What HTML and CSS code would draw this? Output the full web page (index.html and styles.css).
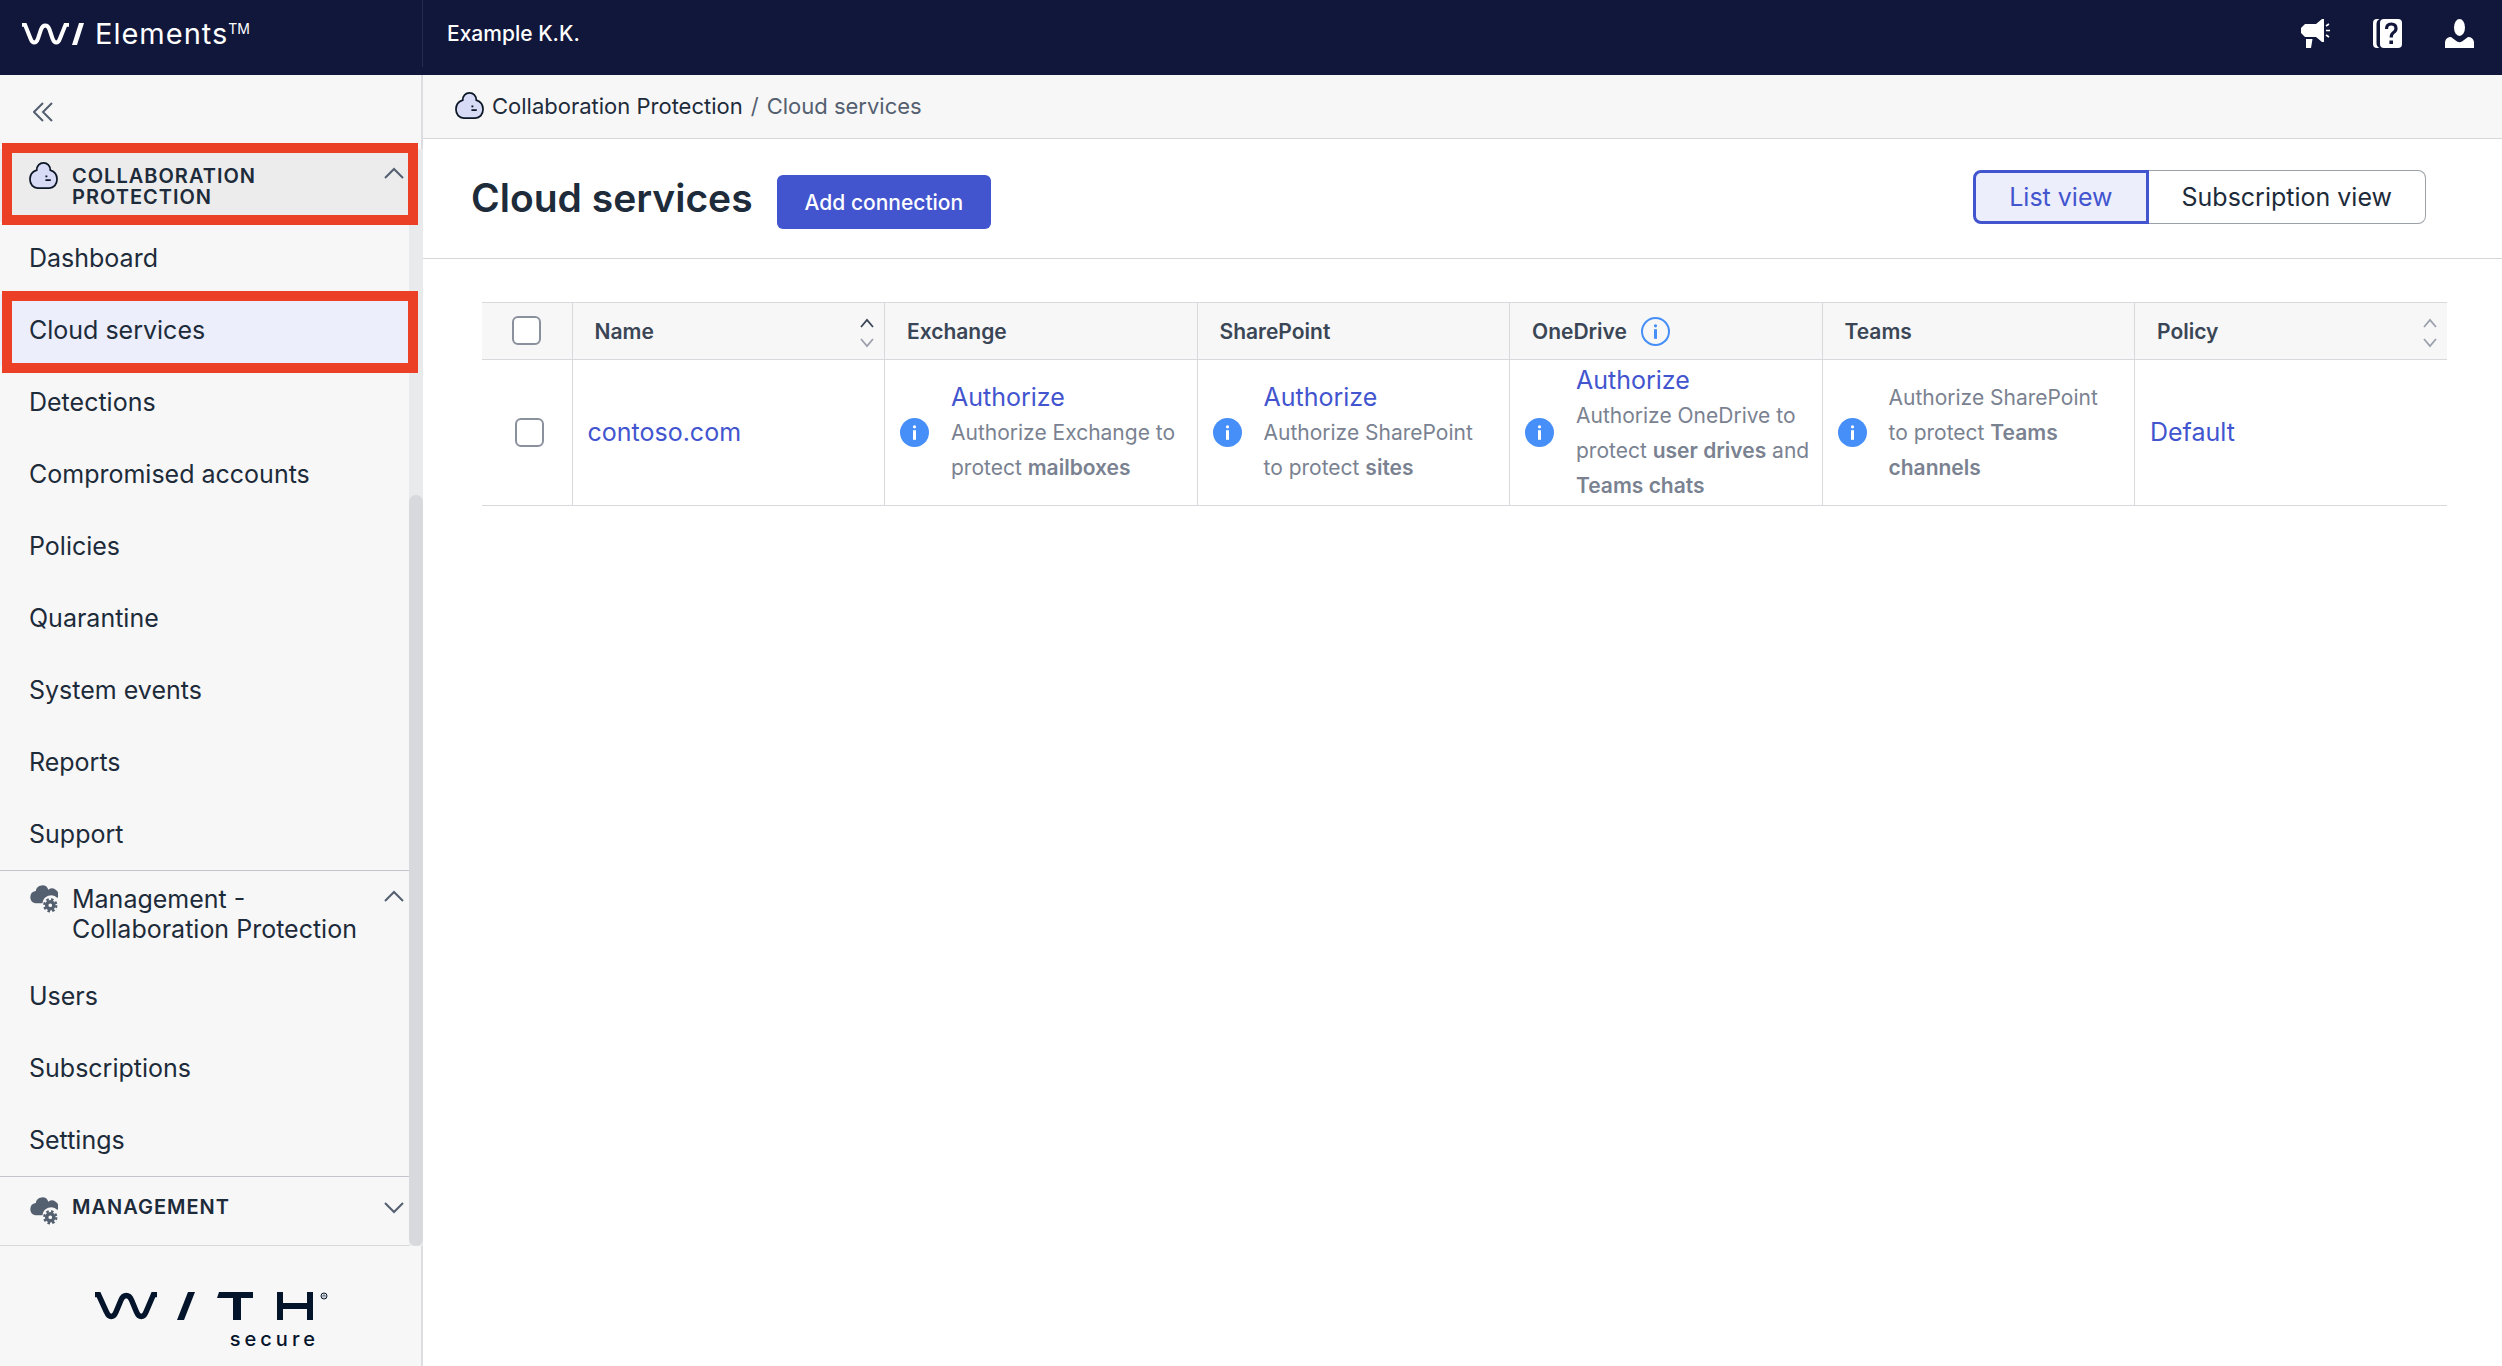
FILE: index.html
```
<!DOCTYPE html>
<html lang="en">
<head>
  <meta charset="UTF-8" />
  <meta name="viewport" content="width=device-width, initial-scale=1.0" />
  <title>Cloud services - Elements</title>
  <link rel="stylesheet" href="styles.css">
</head>
<body>
  <!-- shared icons -->
  <svg class="sprite" aria-hidden="true">
    <symbol id="mascot" viewBox="0 0 30 30">
      <path d="M15 2C11 2 8 5 8 9.500C3.500 11 1 14.500 1 19C1 24.500 4.500 28 9 28H21C25.500 28 29 24.500 29 19C29 14.500 26.500 11 22 9.500C22 5 19 2 15 2Z" fill="#d8dbf6" stroke="#0b1626" stroke-width="1.800"/>
      <path d="M17 15h2v1.800h-2zM17 19h5.500v1.800H17z" fill="#0b1626"/>
    </symbol>
    <symbol id="cloud-gear" viewBox="0 0 30 30">
      <path d="M6.500 20A6.500 6.500 0 0 1 7 7.200A6.700 6.700 0 0 1 20 6A6.500 6.500 0 0 1 29.500 14.500A9 9 0 0 0 14 20Z" fill="#545f70"/>
      <circle cx="22" cy="22" r="3.700" fill="none" stroke="#545f70" stroke-width="3.600"/>
      <circle cx="22" cy="22" r="6.200" fill="none" stroke="#545f70" stroke-width="2.400" stroke-dasharray="2.600 2.270"/>
    </symbol>
    <symbol id="chevron" viewBox="0 0 20 12">
      <path d="M1 11L10 2L19 11" fill="none" stroke="currentColor" stroke-width="2"/>
    </symbol>
    <symbol id="info" viewBox="0 0 29 29">
      <circle cx="14.500" cy="14.500" r="14.500" fill="#478ff8"/>
      <circle cx="14.500" cy="8.800" r="1.600" fill="#fff"/>
      <path d="M13 12.200h3v9.600h-3z" fill="#fff"/>
    </symbol>
    <symbol id="sort" viewBox="0 0 14 30">
      <path d="M1 9L7 2L13 9" fill="none" stroke="var(--sort-up, #9aa1ac)" stroke-width="1.800"/>
      <path d="M1 21L7 28L13 21" fill="none" stroke="#9aa1ac" stroke-width="1.800"/>
    </symbol>
  </svg>

  <header class="topbar">
    <a class="brand" href="#">
      <svg class="brand-mark" viewBox="0 0 64 22" aria-hidden="true">
        <path d="M0 1.800H3L8.500 15.500C10.500 20.800 14 20.800 16 15.500L19 6.500C21 1.200 25.500 1.200 27.500 6.500L30.500 15.500C32.500 20.800 36 20.800 38 15.500L43.500 1.800H47" fill="none" stroke="#fff" stroke-width="4"/>
        <path d="M57 0H62L55 22H50Z" fill="#fff"/>
      </svg>
      <span class="brand-name">Elements<sup>TM</sup></span>
    </a>
    <span class="company">Example K.K.</span>
    <div class="topbar-actions">
      <button type="button" aria-label="Announcements">
        <svg viewBox="0 0 29 29"><path d="M4 5H15L21 0H23V23H21L15 18H4L0 14V9ZM5 20H11.500L10 29H5Z" fill="#fff"/><path d="M25 7L28 5M25 11.500H29M25 16L28 18" stroke="#fff" stroke-width="1.600"/></svg>
      </button>
      <button type="button" aria-label="Help">
        <svg viewBox="0 0 29 29"><path d="M4 0H6.500Q3.500 1.500 3.500 5V24Q3.500 27.500 6.500 29H4Q0 29 0 25V4Q0 0 4 0Z" fill="#fff"/><rect x="7" width="22" height="29" rx="4" fill="#fff"/><path d="M13.500 10Q13.500 5 18.200 5Q23 5 23 9.500Q23 12 20.500 13.500Q18.200 15 18.200 18.500" fill="none" stroke="#11163b" stroke-width="3.200"/><path d="M16.400 21.500H20V25H16.400Z" fill="#11163b"/></svg>
      </button>
      <button type="button" aria-label="Account">
        <svg viewBox="0 0 29 29"><ellipse cx="14.500" cy="8.500" rx="5.500" ry="8.500" fill="#fff"/><path d="M0 29V23Q1 18 6 18L12 22.500Q14.500 24 17 22.500L23 18Q28 18 29 23V29Z" fill="#fff"/></svg>
      </button>
    </div>
  </header>

  <div class="layout">
    <aside class="sidebar">
      <div class="collapse">
        <button type="button" aria-label="Collapse menu">
          <svg viewBox="0 0 20 20"><path d="M10 1L1 10L10 19M19 1L10 10L19 19" fill="none" stroke="#545f70" stroke-width="2"/></svg>
        </button>
      </div>
      <div class="menu">
        <nav class="menu-list">
          <button type="button" class="section caps active callout">
            <svg class="section-icon"><use href="#mascot"/></svg>
            <span>Collaboration Protection</span>
            <svg class="chevron"><use href="#chevron"/></svg>
          </button>
          <a href="#">Dashboard</a>
          <a href="#" class="current callout">Cloud services</a>
          <a href="#">Detections</a>
          <a href="#">Compromised accounts</a>
          <a href="#">Policies</a>
          <a href="#">Quarantine</a>
          <a href="#">System events</a>
          <a href="#">Reports</a>
          <a href="#">Support</a>
          <button type="button" class="section sub">
            <svg class="section-icon"><use href="#cloud-gear"/></svg>
            <span>Management - Collaboration Protection</span>
            <svg class="chevron"><use href="#chevron"/></svg>
          </button>
          <a href="#">Users</a>
          <a href="#">Subscriptions</a>
          <a href="#">Settings</a>
          <button type="button" class="section caps closed">
            <svg class="section-icon"><use href="#cloud-gear"/></svg>
            <span>Management</span>
            <svg class="chevron"><use href="#chevron"/></svg>
          </button>
        </nav>
        <div class="scrollbar"><div class="thumb"></div></div>
      </div>
      <div class="sidebar-footer">
        <div class="with-logo">
          <svg viewBox="0 0 234 28" role="img" aria-label="WITH">
            <path d="M0 2.500H3.500L11.500 20C14 26 18.500 26 21 20L26 8C28.500 2 34 2 36.500 8L41.500 20C44 26 48.500 26 51 20L58.500 2.500H62" fill="none" stroke="#04142b" stroke-width="5.500"/>
            <path d="M93 0H100L89 28H82Z" fill="#04142b"/>
            <path d="M124 0H158V6H146V28H138V6H122Z" fill="#04142b"/>
            <path d="M182 0H188V11H212V0H218V28H212V17H188V28H182Z" fill="#04142b"/>
            <circle cx="229" cy="4" r="3" fill="none" stroke="#04142b"/>
            <path d="M228 5.500V3H230V5.500" fill="none" stroke="#04142b" stroke-width=".6"/>
          </svg>
          <span>secure</span>
        </div>
      </div>
    </aside>

    <main class="content">
      <nav class="breadcrumb">
        <svg><use href="#mascot"/></svg>
        <a href="#">Collaboration Protection</a>
        <span>/</span>
        <span>Cloud services</span>
      </nav>
      <div class="page-head">
        <h1>Cloud services</h1>
        <button type="button" class="primary">Add connection</button>
        <div class="view-switch">
          <button type="button" class="selected">List view</button>
          <button type="button">Subscription view</button>
        </div>
      </div>
      <div class="table-wrap">
        <table>
          <thead>
            <tr>
              <th class="check"><input type="checkbox" aria-label="Select all"></th>
              <th><div class="th-inner">Name <svg class="sort asc"><use href="#sort"/></svg></div></th>
              <th>Exchange</th>
              <th>SharePoint</th>
              <th>
                <div class="th-inner">OneDrive
                  <svg class="info-outline" viewBox="0 0 29 29"><circle cx="14.500" cy="14.500" r="13.500" fill="none" stroke="#478ff8" stroke-width="2"/><circle cx="14.500" cy="8.800" r="1.600" fill="#478ff8"/><path d="M13 12.200h3v9.600h-3z" fill="#478ff8"/></svg>
                </div>
              </th>
              <th>Teams</th>
              <th><div class="th-inner">Policy <svg class="sort"><use href="#sort"/></svg></div></th>
            </tr>
          </thead>
          <tbody>
            <tr>
              <td class="check"><input type="checkbox" aria-label="Select contoso.com"></td>
              <td><a href="#">contoso.com</a></td>
              <td>
                <div class="status"><svg><use href="#info"/></svg>
                  <div><a href="#">Authorize</a><p>Authorize Exchange to protect <b>mailboxes</b></p></div>
                </div>
              </td>
              <td>
                <div class="status"><svg><use href="#info"/></svg>
                  <div><a href="#">Authorize</a><p>Authorize SharePoint to&nbsp;protect <b>sites</b></p></div>
                </div>
              </td>
              <td>
                <div class="status"><svg><use href="#info"/></svg>
                  <div><a href="#">Authorize</a><p>Authorize OneDrive to protect <b>user drives</b> and <b>Teams chats</b></p></div>
                </div>
              </td>
              <td>
                <div class="status"><svg><use href="#info"/></svg>
                  <div><p>Authorize SharePoint to&nbsp;protect <b>Teams channels</b></p></div>
                </div>
              </td>
              <td><a href="#">Default</a></td>
            </tr>
          </tbody>
        </table>
      </div>
    </main>
  </div>
</body>
</html>
```

FILE: styles.css
```
* { margin: 0; padding: 0; box-sizing: border-box; }
body {
  font-family: Inter, "Liberation Sans", sans-serif;
  font-size: 25px;
  color: #1d2b3a;
  background: #fff;
  min-height: 100vh;
  display: flex;
  flex-direction: column;
}
a { text-decoration: none; color: inherit; }
button { font: inherit; color: inherit; background: none; border: none; cursor: pointer; }
svg { display: block; flex: none; }
.sprite { position: absolute; width: 0; height: 0; }

/* top bar */
.topbar {
  height: 75px;
  padding-bottom: 8px;
  background: #11163b;
  color: #fff;
  display: flex;
  align-items: center;
}
.brand {
  width: 423px;
  align-self: stretch;
  display: flex;
  align-items: center;
  gap: 9px;
  padding-left: 22px;
  border-right: 1px solid #262b50;
}
.brand-mark { width: 64px; height: 22px; }
.brand-name {
  font-size: 29px;
  line-height: 30px;
  letter-spacing: 1px;
}
.brand-name sup {
  font-size: 14px;
  line-height: 0;
  vertical-align: 10px;
  letter-spacing: 0;
}
.company {
  font-size: 21px;
  font-weight: 500;
  padding-left: 24px;
}
.topbar-actions {
  margin-left: auto;
  padding-right: 28px;
  display: flex;
  gap: 43px;
}
.topbar-actions svg { width: 29px; height: 29px; }

.layout { flex: 1; display: flex; }

/* sidebar */
.sidebar {
  width: 423px;
  flex: none;
  background: #f7f7f7;
  display: flex;
  flex-direction: column;
}
.collapse {
  height: 74px;
  display: flex;
  align-items: center;
  padding-left: 33px;
  border-right: 2px solid #dcdde1;
}
.collapse svg { width: 20px; height: 20px; }
.menu { display: flex; }
.menu-list { flex: 1; }
.menu-list a {
  display: block;
  height: 72px;
  line-height: 72px;
  padding-left: 29px;
}
.menu-list .current { background: #eceefb; }
.section {
  display: flex;
  align-items: flex-start;
  width: 100%;
  gap: 14px;
  padding: 13px 5px 0 29px;
  text-align: left;
  line-height: 30px;
}
.section span { flex: 1; }
.section-icon { width: 29px; height: 29px; }
.chevron { width: 20px; height: 12px; color: #545f70; margin-top: 6px; }
.caps {
  font-size: 20px;
  font-weight: 600;
  line-height: 21px;
  letter-spacing: 1px;
  text-transform: uppercase;
}
.caps span { padding-top: 5px; }
.active { height: 73px; background: #ececec; padding-top: 12px; }
.sub { height: 90px; border-top: 1px solid #c3c5cb; }
.closed {
  height: 70px;
  padding-top: 19px;
  border-top: 1px solid #c3c5cb;
  border-bottom: 1px solid #d8d9dd;
}
.closed .chevron { transform: rotate(180deg); }
.closed span { padding-top: 1px; }
/* highlight frames */
.callout { position: relative; }
.callout::after {
  content: "";
  position: absolute;
  inset: -6px -9px -3px 2px;
  border: 10px solid #eb4026;
  z-index: 2;
}
.current.callout::after { inset: -3px -9px -7px 2px; }
.scrollbar {
  width: 14px;
  background: #e9eaeb;
  display: flex;
  align-items: flex-end;
}
.thumb { width: 14px; height: 68.5%; border-radius: 7px; background: #d8d9dd; }
.sidebar-footer {
  flex: 1;
  padding: 46px 0 0 95px;
  border-right: 2px solid #dcdde1;
}
.with-logo { width: 234px; color: #04142b; }
.with-logo svg { width: 234px; height: 28px; }
.with-logo span {
  display: block;
  text-align: right;
  font-size: 20px;
  font-weight: 500;
  line-height: 20px;
  letter-spacing: 4px;
  padding: 9px 10px 0 0;
}

/* content */
.content { flex: 1; min-width: 0; }
.breadcrumb {
  height: 64px;
  display: flex;
  align-items: center;
  gap: 8px;
  padding: 0 32px 2px;
  background: #f7f7f7;
  border-bottom: 1px solid #d5d7da;
  font-size: 22px;
}
.breadcrumb svg { width: 29px; height: 29px; }
.breadcrumb span { color: #545f70; }
.page-head {
  height: 120px;
  display: flex;
  align-items: flex-start;
  padding: 31px 76px 0 48px;
  border-bottom: 1px solid #d5d7da;
}
h1 {
  font-size: 39px;
  line-height: 56px;
  font-weight: 600;
}
.primary {
  height: 54px;
  margin: 5px 0 0 24px;
  padding: 0 28px;
  border-radius: 6px;
  background: #4255cf;
  color: #fff;
  font-size: 21px;
  font-weight: 500;
}
.view-switch { margin-left: auto; display: flex; }
.view-switch button {
  height: 54px;
  padding: 0 33px;
  border: 1px solid #9aa1a8;
  border-left: none;
  border-radius: 0 8px 8px 0;
}
.view-switch .selected {
  border: 3px solid #4255cf;
  border-radius: 8px 0 0 8px;
  background: #eceefb;
  color: #4255cf;
}

/* table */
.table-wrap { padding: 43px 55px 0 59px; }
table {
  width: 100%;
  table-layout: fixed;
  border-collapse: collapse;
}
th, td { border: 1px solid #d8d9dd; }
th:first-child, td:first-child { border-left: none; }
th:last-child, td:last-child { border-right: none; }
th {
  height: 57px;
  padding: 0 10px 0 22px;
  background: #f7f7f7;
  color: #3a4656;
  font-size: 21px;
  font-weight: 600;
  text-align: left;
}
.th-inner { display: flex; align-items: center; gap: 14px; }
.sort { width: 14px; height: 30px; margin: 4px 0 0 auto; }
.asc { --sort-up: #3a4656; }
.info-outline { width: 29px; height: 29px; }
td { height: 146px; padding: 0 6px 0 15px; }
th.check { width: 90px; padding: 0 0 2px; text-align: center; }
td.check { padding: 0 0 2px 6px; text-align: center; }
input[type="checkbox"] {
  appearance: none;
  width: 29px;
  height: 29px;
  border: 2px solid #8a909c;
  border-radius: 6px;
  background: #fff;
  vertical-align: middle;
}
td a { color: #4255cf; line-height: 35px; }
.status { display: flex; align-items: center; gap: 22px; }
.status svg { width: 29px; height: 29px; }
.status p { font-size: 21px; line-height: 35px; color: #7a8291; }
.status b { font-weight: 600; }
```
